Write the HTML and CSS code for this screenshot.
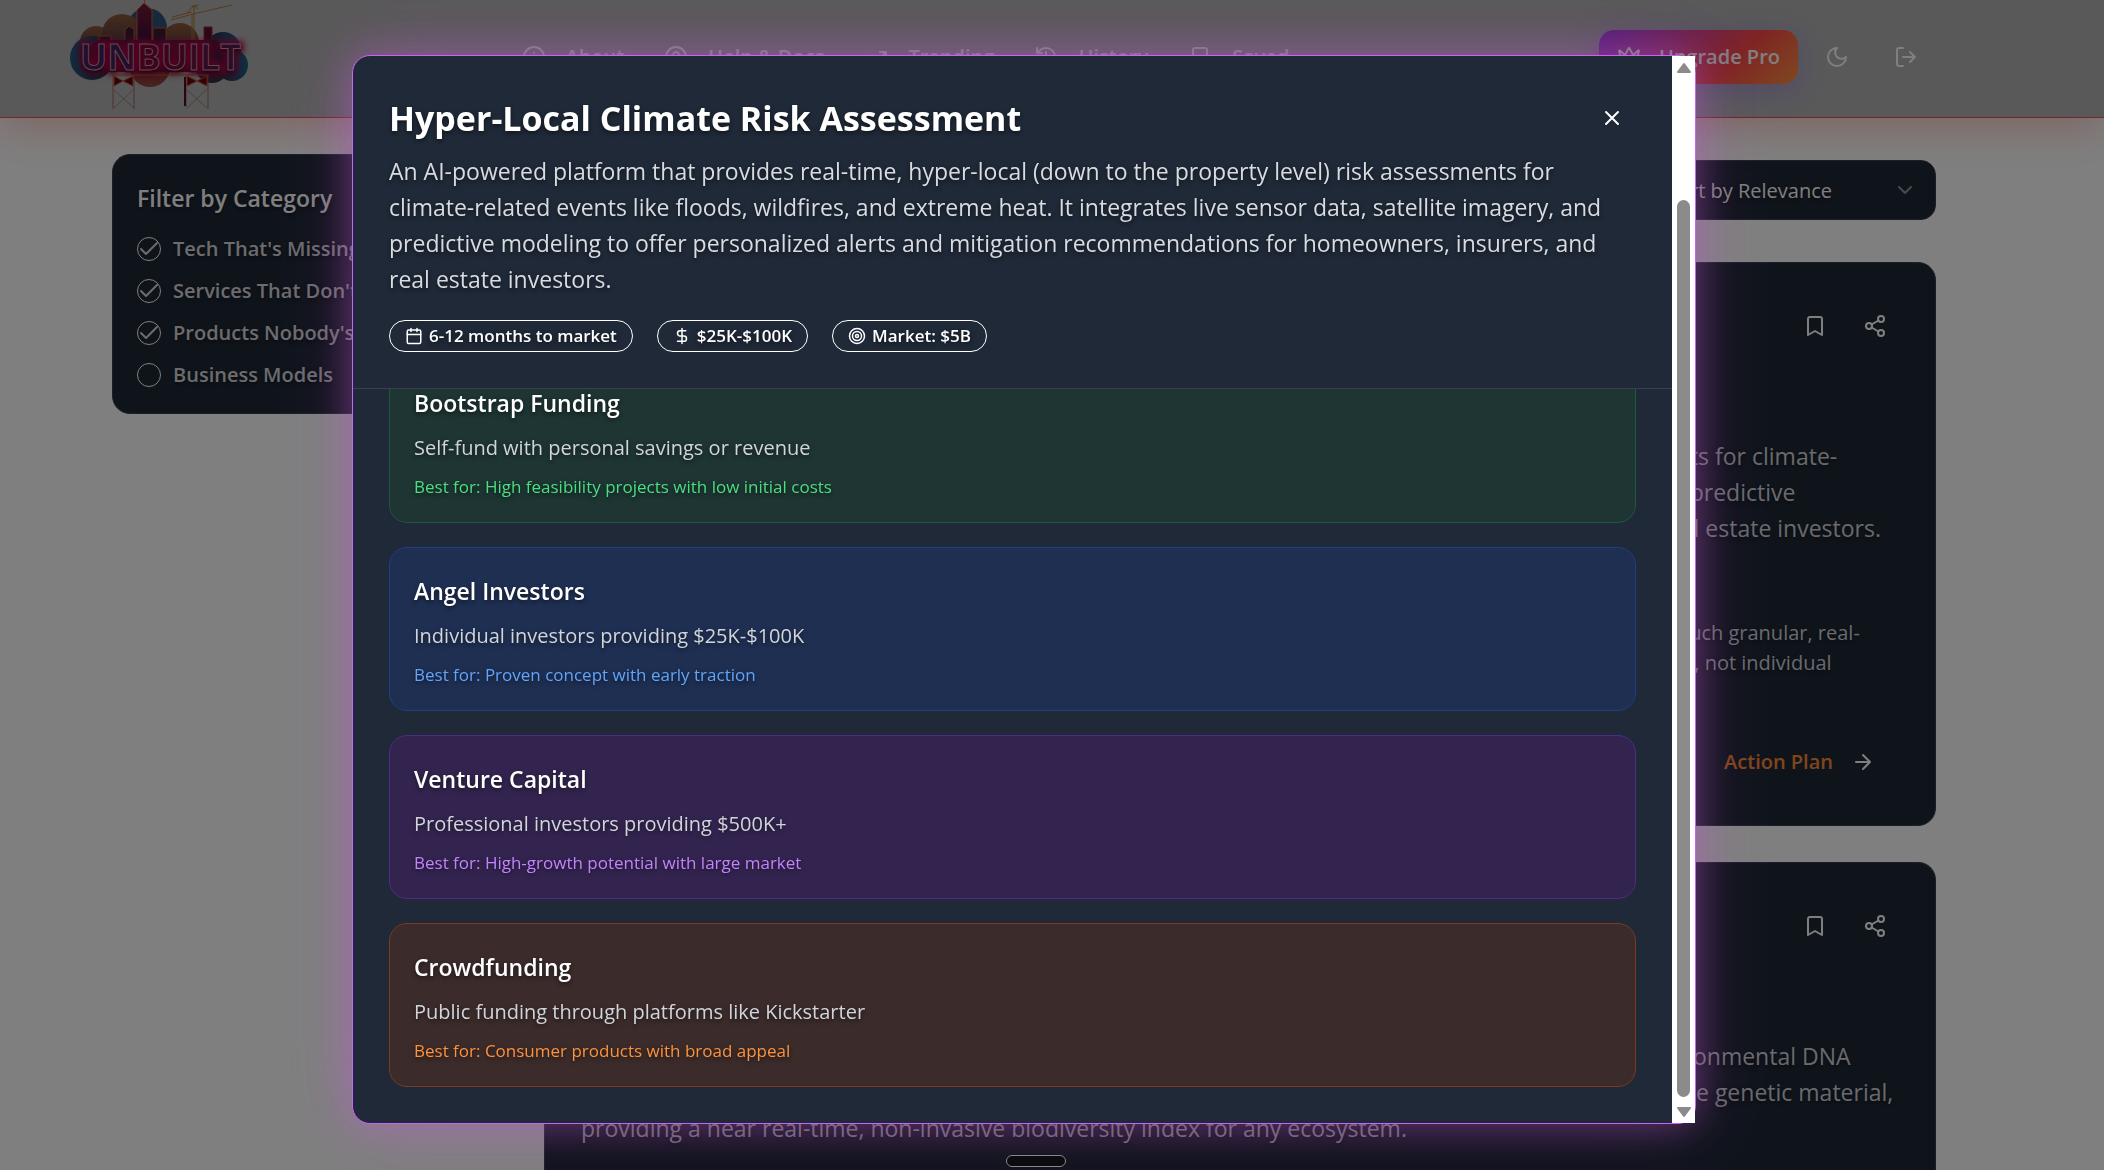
FILE: index.html
```html
<!DOCTYPE html>
<html lang="en">
<head>
<meta charset="utf-8">
<meta name="viewport" content="width=device-width, initial-scale=1">
<title>Unbuilt</title>
<link rel="stylesheet" href="styles.css">
</head>
<body>
<svg width="0" height="0" class="sprite" aria-hidden="true">
  <symbol id="i-bookmark" viewBox="0 0 24 24"><path d="m19 21-7-4-7 4V5a2 2 0 0 1 2-2h10a2 2 0 0 1 2 2v16z"/></symbol>
  <symbol id="i-share" viewBox="0 0 24 24"><circle cx="18" cy="5" r="3"/><circle cx="6" cy="12" r="3"/><circle cx="18" cy="19" r="3"/><path d="m8.59 13.51 6.83 3.98M15.41 6.51l-6.82 3.98"/></symbol>
  <symbol id="i-check" viewBox="0 0 24 24"><path d="M20 6 9 17l-5-5"/></symbol>
</svg>

<header class="topbar">
  <a class="logo" href="#" aria-label="Unbuilt">
    <svg width="200" height="115" viewBox="0 0 200 115">
      <defs>
        <linearGradient id="cloudSide" x1="0" y1="0" x2="1" y2="0"><stop offset="0" stop-color="#1d5a84"/><stop offset="1" stop-color="#2a2034"/></linearGradient>
        <linearGradient id="cloudEnd" x1="1" y1="0" x2="0" y2="0"><stop offset="0" stop-color="#1f5f88"/><stop offset="1" stop-color="#31203a"/></linearGradient>
        <linearGradient id="cloudTop" x1="0" y1="0" x2="0" y2="1"><stop offset="0" stop-color="#8e5a38"/><stop offset="1" stop-color="#3a2c44"/></linearGradient>
        <linearGradient id="cloudLow" x1="0" y1="0" x2="0" y2="1"><stop offset="0" stop-color="#5a1030"/><stop offset="1" stop-color="#94483c"/></linearGradient>
        <linearGradient id="tower" x1="0" y1="0" x2="0" y2="1"><stop offset="0" stop-color="#7c1c34"/><stop offset="1" stop-color="#3c0c3c"/></linearGradient>
        <linearGradient id="neon" x1="0" y1="0" x2="1" y2="0"><stop offset="0" stop-color="#4e2264"/><stop offset=".31" stop-color="#4e2264"/><stop offset=".32" stop-color="#94063a"/><stop offset=".62" stop-color="#80103c"/><stop offset="1" stop-color="#5a2058"/></linearGradient>
        <filter id="glow" x="-20%" y="-60%" width="140%" height="220%"><feGaussianBlur stdDeviation="3"/></filter>
      </defs>
      <circle cx="87" cy="28" r="20" fill="#2d5478"/>
      <circle cx="36" cy="42" r="16" fill="url(#cloudTop)"/>
      <circle cx="62" cy="34" r="20" fill="url(#cloudTop)"/>
      <circle cx="120" cy="42" r="19" fill="url(#cloudTop)"/>
      <circle cx="163" cy="50" r="18" fill="url(#cloudEnd)"/>
      <circle cx="32" cy="58" r="22" fill="url(#cloudSide)"/>
      <circle cx="172" cy="65" r="16" fill="url(#cloudEnd)"/>
      <circle cx="152" cy="66" r="17" fill="#3a2a44"/>
      <circle cx="90" cy="67" r="20" fill="url(#cloudLow)"/>
      <rect x="30" y="40" width="135" height="32" rx="12" fill="#3a1a3a"/>
      <path d="M77 40V10l7-7 8 7v30M84.500 3v-5" fill="url(#tower)" stroke="#c8583a"/>
      <path d="M93 40V28h13v12M65 40V30l4-4 5 3v11M39 40v-4h12v4" fill="#3c1834" stroke="#b4502e"/>
      <path d="M144 40V27h8v13" fill="#5a0c30" stroke="#8a2c30"/>
      <path d="M111 20l22-6 39-9M138 5l-6 2M134 5v35M132 14v26M112 17l20-5M138 9l-4-4-7 8" fill="none" stroke="#a8742c"/>
      <text x="20" y="70" class="logo-glow" filter="url(#glow)">UNBUILT</text>
      <text x="20" y="70" class="logo-text">UNBUILT</text>
      <path d="M53 75H149" fill="none" stroke="#b04c34"/>
      <path d="M53 75v34M74 75v34M126 75v32M148 75v34" fill="none" stroke="#94543c" stroke-width=".8"/>
      <path d="M54 76l9 5 10-5v10l-10-5-9 5zM127 76l10 5 10-5v10l-10-5-10 5z" fill="#5a0810" stroke="#c84c30"/>
      <path d="M54 108l20-19M54 90l20 18M127 108l20-19M127 90l20 18" stroke="#8a6458" stroke-width=".7" fill="none"/>
      <path d="M125 77v29" stroke="#4a1020" stroke-width="2"/>
    </svg>
  </a>
  <nav class="nav" aria-label="Main">
    <a href="#"><svg class="icon" viewBox="0 0 24 24"><circle cx="12" cy="12" r="10"/><path d="M12 16v-4M12 8h.01"/></svg>About</a>
    <a href="#"><svg class="icon" viewBox="0 0 24 24"><circle cx="12" cy="12" r="10"/><path d="M9.090 9a3 3 0 0 1 5.830 1c0 2-3 3-3 3M12 17h.01"/></svg>Help &amp; Docs</a>
    <a href="#"><svg class="icon" viewBox="0 0 24 24"><path d="m22 7-8.500 8.500-5-5L2 17M16 7h6v6"/></svg>Trending</a>
    <a href="#"><svg class="icon" viewBox="0 0 24 24"><path d="M3 12a9 9 0 1 0 9-9 9.750 9.750 0 0 0-6.740 2.740L3 8M3 3v5h5M12 7v5l4 2"/></svg>History</a>
    <a href="#"><svg class="icon" viewBox="0 0 24 24"><use href="#i-bookmark"/></svg>Saved</a>
  </nav>
  <div class="actions">
    <button class="upgrade" type="button"><svg class="icon" viewBox="0 0 24 24"><path d="M11.562 3.266a.5.5 0 0 1 .876 0L15.390 8.870a1 1 0 0 0 1.516.294L21.183 5.500a.5.5 0 0 1 .798.519l-2.834 10.246a1 1 0 0 1-.956.734H5.810a1 1 0 0 1-.957-.734L2.020 6.020a.5.5 0 0 1 .798-.519l4.276 3.664a1 1 0 0 0 1.516-.294zM5 21h14"/></svg>Upgrade Pro</button>
    <button class="icon-btn wide" type="button" aria-label="Dark mode"><svg class="icon" viewBox="0 0 24 24"><path d="M12 3a6 6 0 0 0 9 9 9 9 0 1 1-9-9Z"/></svg></button>
    <button class="icon-btn wide" type="button" aria-label="Log out"><svg class="icon" viewBox="0 0 24 24"><path d="M9 21H5a2 2 0 0 1-2-2V5a2 2 0 0 1 2-2h4M16 17l5-5-5-5M21 12H9"/></svg></button>
  </div>
</header>

<main class="page">
  <aside class="panel filters">
    <h2>Filter by Category</h2>
    <label><span class="tick"><input type="checkbox" checked><svg class="icon" viewBox="0 0 24 24"><use href="#i-check"/></svg></span>Tech That's Missing</label>
    <label><span class="tick"><input type="checkbox" checked><svg class="icon" viewBox="0 0 24 24"><use href="#i-check"/></svg></span>Services That Don't Exist</label>
    <label><span class="tick"><input type="checkbox" checked><svg class="icon" viewBox="0 0 24 24"><use href="#i-check"/></svg></span>Products Nobody's Made</label>
    <label><span class="tick"><input type="checkbox"></span>Business Models</label>
  </aside>
  <section class="results">
    <div class="toolbar">
      <div class="sort">
        <select aria-label="Sort results"><option>Sort by Relevance</option></select>
        <svg class="icon chevron" viewBox="0 0 24 24"><path d="m6 9 6 6 6-6"/></svg>
      </div>
    </div>
    <article class="panel idea">
      <div class="idea-head">
        <button class="icon-btn" type="button" aria-label="Save"><svg class="icon" viewBox="0 0 24 24"><use href="#i-bookmark"/></svg></button>
        <button class="icon-btn" type="button" aria-label="Share"><svg class="icon" viewBox="0 0 24 24"><use href="#i-share"/></svg></button>
      </div>
      <p class="lead">An AI-powered platform that provides real-time, hyper-local (down to the property level) risk assessments for climate-<br>related events like floods, wildfires, &amp; extreme heat. It integrates live sensor data, satellite imagery, and predictive<br>modeling to offer personalized alerts &amp; mitigation recommendations for homeowners, insurers, and real estate investors.</p>
      <p class="note">Existing climate models and data are still often too broad. The computational power and data integration required for such granular, real-<br>time insights are only now becoming feasible at scale, and current offerings are mostly for large commercial enterprises, not individual</p>
      <div class="idea-foot"><a href="#">Action Plan<svg class="icon" viewBox="0 0 24 24"><path d="M5 12h14M12 5l7 7-7 7"/></svg></a></div>
    </article>
    <article class="panel idea">
      <div class="idea-head">
        <button class="icon-btn" type="button" aria-label="Save"><svg class="icon" viewBox="0 0 24 24"><use href="#i-bookmark"/></svg></button>
        <button class="icon-btn" type="button" aria-label="Share"><svg class="icon" viewBox="0 0 24 24"><use href="#i-share"/></svg></button>
      </div>
      <p class="lead">An automated network of autonomous sensors that continuously collect and sequence samples of environmental DNA<br>(eDNA) from soil, water, and air. The system identifies the species present in a given area by analyzing the genetic material,<br>providing a near real-time, non-invasive biodiversity index for any ecosystem.</p>
    </article>
  </section>
</main>

<div class="overlay">
  <div class="modal" role="dialog" aria-modal="true" aria-labelledby="dlg-title">
    <div class="modal-main">
      <header class="modal-head">
        <div class="title-row">
          <h1 id="dlg-title">Hyper-Local Climate Risk Assessment</h1>
          <button class="icon-btn" type="button" aria-label="Close"><svg class="icon" viewBox="0 0 24 24"><path d="M18 6 6 18M6 6l12 12"/></svg></button>
        </div>
        <p>An AI-powered platform that provides real-time, hyper-local (down to the property level) risk assessments for climate-related events like floods, wildfires, and extreme heat. It integrates live sensor data, satellite imagery, and predictive modeling to offer personalized alerts and mitigation recommendations for homeowners, insurers, and real estate investors.</p>
        <ul class="badges">
          <li><svg class="icon" viewBox="0 0 24 24"><path d="M8 2v4M16 2v4M3 10h18"/><rect x="3" y="4" width="18" height="18" rx="2"/></svg>6-12 months to market</li>
          <li><svg class="icon" viewBox="0 0 24 24"><path d="M12 2v20M17 5H9.500a3.500 3.500 0 0 0 0 7h5a3.500 3.500 0 0 1 0 7H6"/></svg>$25K-$100K</li>
          <li><svg class="icon" viewBox="0 0 24 24"><circle cx="12" cy="12" r="10"/><circle cx="12" cy="12" r="6"/><circle cx="12" cy="12" r="2"/></svg>Market: $5B</li>
        </ul>
      </header>
      <div class="funding">
        <section class="fund green"><h2>Bootstrap Funding</h2><p>Self-fund with personal savings or revenue</p><p class="best">Best for: High feasibility projects with low initial costs</p></section>
        <section class="fund blue"><h2>Angel Investors</h2><p>Individual investors providing $25K-$100K</p><p class="best">Best for: Proven concept with early traction</p></section>
        <section class="fund purple"><h2>Venture Capital</h2><p>Professional investors providing $500K+</p><p class="best">Best for: High-growth potential with large market</p></section>
        <section class="fund orange"><h2>Crowdfunding</h2><p>Public funding through platforms like Kickstarter</p><p class="best">Best for: Consumer products with broad appeal</p></section>
      </div>
    </div>
    <div class="scrollbar" aria-hidden="true">
      <svg width="16" height="12" viewBox="0 0 16 12"><path d="M8 2 14 10H2z"/></svg>
      <span class="thumb"></span>
      <svg width="16" height="12" viewBox="0 0 16 12"><path d="M8 10 14 2H2z"/></svg>
    </div>
  </div>
</div>
<div class="handle"></div>
</body>
</html>
```
FILE: styles.css
```css
* { box-sizing: border-box; }
html { height: 100%; overflow: hidden; }
body {
  display: flex;
  flex-direction: column;
  margin: 0;
  height: 100%;
  overflow: hidden;
  background: #fff;
  color: #fff;
  font-family: "Open Sans", "Noto Sans", sans-serif;
  font-size: 20px;
  line-height: 30px;
  text-shadow: 0 2px 4px rgba(0, 0, 0, .5);
}
h1, h2, p, ul { margin: 0; padding: 0; }
h2 { font-size: 23px; line-height: 36px; font-weight: 600; }
a { color: inherit; text-decoration: none; }
button { font: inherit; color: inherit; border: 0; padding: 0; background: none; text-shadow: none; }
.sprite { position: absolute; }
.icon {
  width: 24px;
  height: 24px;
  flex: none;
  fill: none;
  stroke: currentColor;
  stroke-width: 2;
  stroke-linecap: round;
  stroke-linejoin: round;
}

/* Top bar */
.topbar {
  position: relative;
  flex: none;
  display: flex;
  align-items: center;
  justify-content: space-between;
  height: 118px;
  padding: 0 168px 3px 60px;
  background: #b3b3b3;
  border-bottom: 1px solid #f04850;
  box-shadow: 0 10px 40px rgba(240, 84, 64, .3);
}
.logo { display: flex; }
.logo-glow, .logo-text { font: 700 36px "Open Sans", sans-serif; }
.logo-glow { fill: #c8004c; stroke: #c8004c; stroke-width: 6; }
.logo-text { fill: url(#neon); stroke: #b894ac; stroke-width: 1; }
.nav { display: flex; margin-right: 48px; }
.nav a {
  display: flex;
  align-items: center;
  gap: 20px;
  padding: 0 20px;
  font-weight: 600;
  text-shadow: none;
}
.actions { display: flex; align-items: center; gap: 9px; }
.upgrade {
  display: flex;
  align-items: center;
  gap: 18px;
  height: 54px;
  padding: 0 18px;
  border-radius: 15px;
  font-weight: 600;
  background: linear-gradient(135deg, #a03cf0, #ff4848 65%, #ff9040);
  box-shadow: 0 6px 30px rgba(139, 92, 246, .4);
}
.icon-btn { display: flex; align-items: center; justify-content: center; width: 48px; height: 54px; }
.wide { width: 60px; }

/* Page behind the dialog */
.page {
  flex: 1;
  display: flex;
  align-items: flex-start;
  gap: 48px;
  min-height: 0;
  margin-right: 56px;
  padding: 36px 112px 0;
}
.panel { background: #1f2937; border: 1px solid #374151; border-radius: 18px; }
.filters { position: relative; flex: none; width: 384px; padding: 25px 24px 23px; }
.filters h2 { margin-bottom: 18px; }
.filters label { display: flex; align-items: center; gap: 12px; font-weight: 600; color: #d8d8dc; }
.filters label + label { margin-top: 12px; }
.tick { display: grid; width: 24px; height: 24px; }
.tick > * { grid-area: 1 / 1; }
.tick input { appearance: none; width: 24px; height: 24px; margin: 0; border: 1px solid #fff; border-radius: 50%; }
.results { flex: 1; display: flex; flex-direction: column; gap: 36px; min-width: 0; height: 100%; }
.toolbar { flex: none; display: flex; align-items: center; justify-content: flex-end; height: 72px; }
.sort { display: grid; align-items: center; width: 288px; height: 60px; }
.sort > * { grid-area: 1 / 1; }
.sort select {
  appearance: none;
  width: 100%;
  height: 100%;
  padding: 2px 18px 0;
  color: #fff;
  font: inherit;
  text-shadow: inherit;
  background: #1f2937;
  border: 1px solid #374151;
  border-radius: 15px;
}
.chevron { justify-self: end; margin-right: 19px; opacity: .5; }
.idea { flex: none; padding: 36px; white-space: nowrap; }
.idea:last-child { flex: 1; border-bottom: 0; border-radius: 18px 18px 0 0; padding-bottom: 0; }
.idea-head { display: flex; justify-content: flex-end; gap: 12px; margin-bottom: 85px; }
.idea-foot { display: flex; justify-content: flex-end; }
.lead { font-size: 23px; line-height: 36px; color: #d1d5db; }
.note { margin: 72px 0 57px; color: #d1d5db; }
.idea-foot a { display: flex; align-items: center; gap: 18px; height: 54px; padding: 0 24px; font-weight: 600; color: #ff8c38; text-shadow: none; }
.idea-foot svg { color: #fff; }

/* Dialog */
.overlay {
  position: fixed;
  inset: 0;
  display: flex;
  justify-content: center;
  padding: 55px 56px 46px 0;
  background: rgba(0, 0, 0, .5);
}
.modal {
  display: flex;
  width: 1344px;
  max-width: 100%;
  background: #1f2937;
  border: 1px solid #c864f5;
  border-radius: 18px;
  box-shadow: 0 0 40px rgba(205, 90, 225, .45), 0 0 80px rgba(205, 90, 225, .15);
}
.modal-main { flex: 1; display: flex; flex-direction: column; min-width: 0; min-height: 0; }
.modal-head { flex: none; padding: 35px 36px 36px; border-bottom: 1px solid #374151; }
.title-row { display: flex; align-items: center; justify-content: space-between; margin-bottom: 8px; }
h1 { font-size: 34px; line-height: 54px; font-weight: 700; }
.modal-head p { font-size: 23px; line-height: 36px; color: #d8dce2; }
.badges { display: flex; gap: 24px; margin-top: 23px; list-style: none; }
.badges li {
  display: flex;
  align-items: center;
  gap: 6px;
  height: 32px;
  padding: 0 15px;
  border: 1px solid #fff;
  border-radius: 16px;
  font-size: 17px;
  font-weight: 600;
}
.badges svg { width: 18px; height: 18px; }
.funding {
  flex: 1;
  display: flex;
  flex-direction: column;
  justify-content: flex-end;
  gap: 24px;
  min-height: 0;
  padding: 0 36px 36px;
  overflow: hidden;
}
.fund { flex: none; padding: 25px 24px 23px; border: 1px solid; border-radius: 18px; }
.fund p { margin-top: 12px; color: #d1d5db; }
.fund .best { font-size: 17px; line-height: 24px; }
.green { background: #1e3533; border-color: #1c5a3c; }
.green .best { color: #4ade80; }
.blue { background: #1f2f52; border-color: #1f3f85; }
.blue .best { color: #60a5fa; }
.purple { background: #33244f; border-color: #502a86; }
.purple .best { color: #c084fc; }
.orange { background: #3b2b2b; border-color: #783c20; }
.orange .best { color: #fb923c; }
.scrollbar {
  flex: none;
  display: flex;
  flex-direction: column;
  align-items: center;
  width: 23px;
  padding: 6px 0 5px;
  background: #fff;
}
.scrollbar svg { fill: #8b8b8b; stroke: #8b8b8b; stroke-width: 2; stroke-linejoin: round; }
.thumb { flex: 1; width: 13px; margin: 126px 0 9px; border-radius: 7px; background: #8b8b8b; }
.handle {
  position: fixed;
  left: 1006px;
  bottom: 3px;
  width: 60px;
  height: 12px;
  border: 1px solid #888;
  border-radius: 6px;
  background: #0b0b10;
}
```
